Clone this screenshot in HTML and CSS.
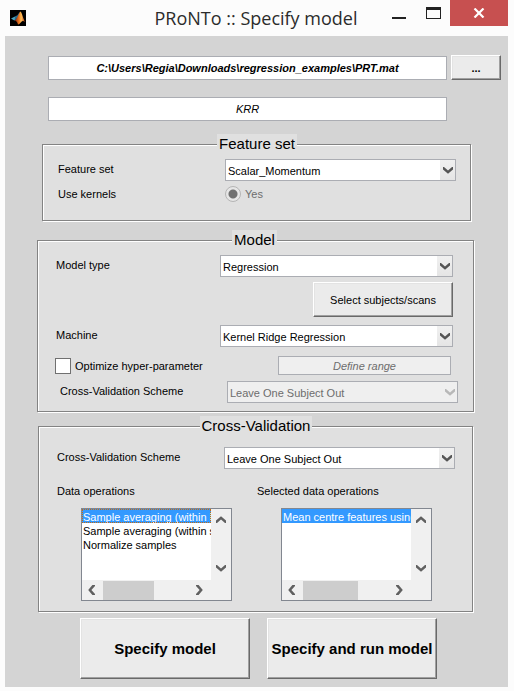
FILE: index.html
```html
<!DOCTYPE html>
<html lang="en">
<head>
<meta charset="utf-8">
<title>PRoNTo :: Specify model</title>
<link rel="stylesheet" href="styles.css">
</head>
<body>
<svg width="0" height="0" class="defs" aria-hidden="true">
  <symbol id="down" viewBox="0 0 10 8"><path d="M0 1v2.6L5 7.8l5-4.2V1H9L5 4.6 1 1z"/></symbol>
  <symbol id="up" viewBox="0 0 10 8"><path d="M0 7V4.4L5 .2l5 4.2V7H9L5 3.4 1 7z"/></symbol>
  <symbol id="left" viewBox="0 0 8 10"><path d="M7 0H4.4L.2 5l4.2 5H7V9L3.4 5 7 1z"/></symbol>
  <symbol id="right" viewBox="0 0 8 10"><path d="M1 0h2.6l4.2 5-4.2 5H1V9l3.6-4L1 1z"/></symbol>
</svg>
<header class="titlebar">
  <svg class="logo" viewBox="0 0 16 16" aria-hidden="true">
    <defs><linearGradient id="flame" x1="0" x2="1"><stop offset="0" stop-color="#7c1d12"/><stop offset=".45" stop-color="#ef7d22"/><stop offset=".62" stop-color="#ffc35a"/><stop offset="1" stop-color="#b5320f"/></linearGradient></defs>
    <rect width="16" height="16" fill="#000"/>
    <path d="M1 8.6 5 6.4 7 7.6 4.6 10.6 3.4 10z" fill="#4aa3bf"/>
    <path d="M5 6.4 7.4 5.2 10 1.6 8 7.6 4.6 10.6z" fill="#2b6c8c"/>
    <path d="M4.6 10.6C7.4 9 8.6 3 10.4 1.4 12 2 13 8.6 15.2 12 13.4 10.8 12.4 10.6 11 12.2 10 13.4 9.2 14.2 8 14.4 7.4 12.4 6.4 10.8 4.6 10.6z" fill="url(#flame)"/>
  </svg>
  <h1 class="title">PRoNTo :: Specify model</h1>
  <div class="controls">
    <button class="control" aria-label="Minimize"><svg width="14" height="12" viewBox="0 0 14 12"><path d="M0 10h14v2H0z" fill="#222"/></svg></button>
    <button class="control" aria-label="Maximize"><svg width="15" height="12" viewBox="0 0 15 12"><path d="M0 0h15v12H0zM1 3v8h13V3z" fill="#222" fill-rule="evenodd"/></svg></button>
    <button class="control close" aria-label="Close"><svg width="12" height="10" viewBox="0 0 12 10"><path d="M1.5 .5 10.5 9.5M10.5 .5 1.5 9.5" stroke="#fff" stroke-width="2.2"/></svg></button>
  </div>
</header>
<main class="panel">
  <div class="file-row">
    <input class="field path" aria-label="PRT file" value="C:\Users\Regia\Downloads\regression_examples\PRT.mat">
    <button class="button browse">...</button>
  </div>
  <div class="name-row">
    <input class="field name" aria-label="Model name" value="KRR">
  </div>

  <fieldset class="group features">
    <legend>Feature set</legend>
    <div class="row">
      <label for="fset">Feature set</label>
      <span class="combo"><select id="fset"><option>Scalar_Momentum</option></select><svg><use href="#down"/></svg></span>
    </div>
    <div class="row kernels">
      <span>Use kernels</span>
      <label class="choice muted"><input type="radio" checked disabled>Yes</label>
    </div>
  </fieldset>

  <fieldset class="group model">
    <legend>Model</legend>
    <div class="row">
      <label for="mtype">Model type</label>
      <span class="combo"><select id="mtype"><option>Regression</option></select><svg><use href="#down"/></svg></span>
    </div>
    <div class="row action"><button class="button select-scans">Select subjects/scans</button></div>
    <div class="row">
      <label for="machine">Machine</label>
      <span class="combo"><select id="machine"><option>Kernel Ridge Regression</option></select><svg><use href="#down"/></svg></span>
    </div>
    <div class="row optimize">
      <label class="choice"><input type="checkbox">Optimize hyper-parameter</label>
      <input class="field range" aria-label="Range" value="Define range" disabled>
    </div>
    <div class="row nested">
      <label for="inner">Cross-Validation Scheme</label>
      <span class="combo"><select id="inner" disabled><option>Leave One Subject Out</option></select><svg><use href="#down"/></svg></span>
    </div>
  </fieldset>

  <fieldset class="group validation">
    <legend>Cross-Validation</legend>
    <div class="row">
      <label for="outer">Cross-Validation Scheme</label>
      <span class="combo"><select id="outer"><option>Leave One Subject Out</option></select><svg><use href="#down"/></svg></span>
    </div>
    <div class="lists">
      <div>
        <label for="ops">Data operations</label>
        <div class="listbox">
          <select id="ops" size="5"><option class="focused" selected>Sample averaging (within block)</option><option>Sample averaging (within subject)</option><option>Normalize samples</option></select>
          <div class="vbar"><svg width="10" height="8"><use href="#up"/></svg><svg width="10" height="8"><use href="#down"/></svg></div>
          <div class="hbar"><svg width="8" height="10"><use href="#left"/></svg><span class="thumb"></span><svg width="8" height="10"><use href="#right"/></svg></div>
        </div>
      </div>
      <div>
        <label for="sel">Selected data operations</label>
        <div class="listbox">
          <select id="sel" size="5"><option selected>Mean centre features using</option></select>
          <div class="vbar"><svg width="10" height="8"><use href="#up"/></svg><svg width="10" height="8"><use href="#down"/></svg></div>
          <div class="hbar"><svg width="8" height="10"><use href="#left"/></svg><span class="thumb wide"></span><svg width="8" height="10"><use href="#right"/></svg></div>
        </div>
      </div>
    </div>
  </fieldset>

  <div class="footer">
    <button class="button big">Specify model</button>
    <button class="button big">Specify and run model</button>
  </div>
</main>
</body>
</html>
```
FILE: styles.css
```css
* { box-sizing: border-box; }

body {
  margin: 0;
  min-height: 100vh;
  display: flex;
  flex-direction: column;
  background: #fcfcfc;
  color: #000;
  font: 11px/14px "Liberation Sans", Arial, sans-serif;
}

button, input, select { font: inherit; color: inherit; margin: 0; border-radius: 0; }
.defs { position: absolute; }

.titlebar {
  height: 36px;
  display: grid;
  grid-template-columns: 1fr auto 1fr;
  align-items: start;
  padding: 0 6px 0 4px;
}
.logo { width: 16px; height: 16px; margin: 10px 0 0 6px; }
.title {
  margin: 0;
  font: 18px/36px "Open Sans", "Noto Sans", sans-serif;
  color: #2b2b2b;
  white-space: nowrap;
}
.controls { display: flex; justify-content: flex-end; }
.control {
  width: 34px;
  height: 26px;
  padding: 0;
  border: 0;
  background: none;
  display: grid;
  place-items: center;
}
.control.close { width: 58px; background: #c75050; }

.panel {
  flex: 1;
  margin: 0 6px 4px 5px;
  padding: 19px 0 8px;
  background: #d4d4d4;
}

.field {
  width: 100%;
  height: 24px;
  padding: 0 4px;
  border: 1px solid #abadb3;
  background: #fff;
  text-align: center;
  font-style: italic;
}
.path { font-weight: bold; }
.file-row { display: flex; align-items: flex-end; gap: 4px; padding: 0 7px 0 43px; }
.name-row { padding: 17px 61px 0 43px; }

.button {
  border: 1px solid;
  border-color: #fff #696969 #696969 #fff;
  box-shadow: inset -1px -1px #a0a0a0, inset 1px 1px #e3e3e3;
  background: #ebebeb;
  padding: 0;
}
.browse { flex: none; width: 50px; height: 25px; font-weight: bold; }

.group {
  min-width: 0;
  border: 1px solid #838383;
  background: #e0e0e0;
  box-shadow: 1px 1px #fff, inset 1px 1px #fff;
}
.group legend {
  margin: 0 auto;
  padding: 0 2px;
  background: #e0e0e0;
  font-size: 15px;
  line-height: 20px;
}
.features { margin: 13px 37px 0 37px; padding: 5px 14px 18px 15px; }
.model { margin: 9px 34px 0 32px; padding: 5px 20px 8px 18px; }
.validation { margin: 4px 35px 0 33px; padding: 11px 17px 10px 18px; }

.row { display: grid; grid-template-columns: 167px 1fr; align-items: center; }
.row > label:not(.choice) { padding-bottom: 2px; }
.model .row { grid-template-columns: 164px 1fr; }
.kernels { margin-top: 5px; }
.muted { color: #6d6d6d; }

.combo { position: relative; display: block; }
.combo select {
  display: block;
  width: 100%;
  height: 22px;
  padding: 2px 18px 0 2px;
  border: 1px solid #abadb3;
  background: linear-gradient(#f0f0f0, #e5e5e5) right / 15px 100% no-repeat #fff;
  appearance: none;
}
.combo svg { position: absolute; right: 3px; top: 7px; width: 10px; height: 8px; fill: #555; pointer-events: none; }
.combo select:disabled { background: #efefef; color: #6d6d6d; opacity: 1; }
.combo select:disabled + svg { fill: #b8b8b8; }

.choice { display: flex; align-items: center; gap: 4px; }
.choice input { appearance: none; flex: none; width: 16px; height: 16px; }
.choice input[type="radio"] {
  border: 1px solid #b5b5b5;
  border-radius: 50%;
  background: radial-gradient(circle, #707070 0 4px, #e6e6e6 5px);
}
.choice input[type="checkbox"] { border: 1px solid #707070; background: #fff; }

.model .action { display: flex; justify-content: flex-end; margin: 5px 0 8px; }
.select-scans { width: 140px; height: 35px; }
.model .optimize { grid-template-columns: 223px 1fr; margin: 9px 2px 6px -1px; }
.range { height: 19px; background: #efefef; color: #6d6d6d; }
.model .nested { grid-template-columns: 167px 1fr; margin: 0 -5px 0 4px; }

.lists { display: grid; grid-template-columns: 200px 1fr; margin-top: 15px; }
.lists label { display: block; }
.listbox {
  display: grid;
  grid-template: 71px 20px / 129px 20px;
  width: 151px;
  margin: 10px 0 0 24px;
  border: 1px solid #828790;
  background: #f0f0f0;
}
.listbox select {
  width: 129px;
  height: 71px;
  padding: 0;
  border: 0;
  outline: 0;
  background: #fff;
  overflow: hidden;
}
.listbox option { min-height: 14px; height: 14px; padding: 2px 1px 0; line-height: 14px; overflow: hidden; }
.listbox option:checked { background: linear-gradient(#39f, #39f); -webkit-text-fill-color: #fff; }
.listbox .focused { outline: 1px dotted #c66a10; outline-offset: -1px; }
.listbox svg { fill: #606060; flex: none; }
.vbar { display: flex; flex-direction: column; justify-content: space-between; align-items: center; padding: 7px 0 8px; }
.hbar { display: flex; align-items: center; padding-left: 6px; }
.thumb { width: 51px; height: 19px; margin: 0 41px 0 7px; background: #cdcdcd; }
.thumb.wide { width: 55px; margin-right: 37px; }

.footer { display: flex; gap: 17px; margin: 6px 71px 0 75px; }
.big { flex: 1; height: 61px; font-size: 15px; font-weight: bold; white-space: nowrap; }
```
